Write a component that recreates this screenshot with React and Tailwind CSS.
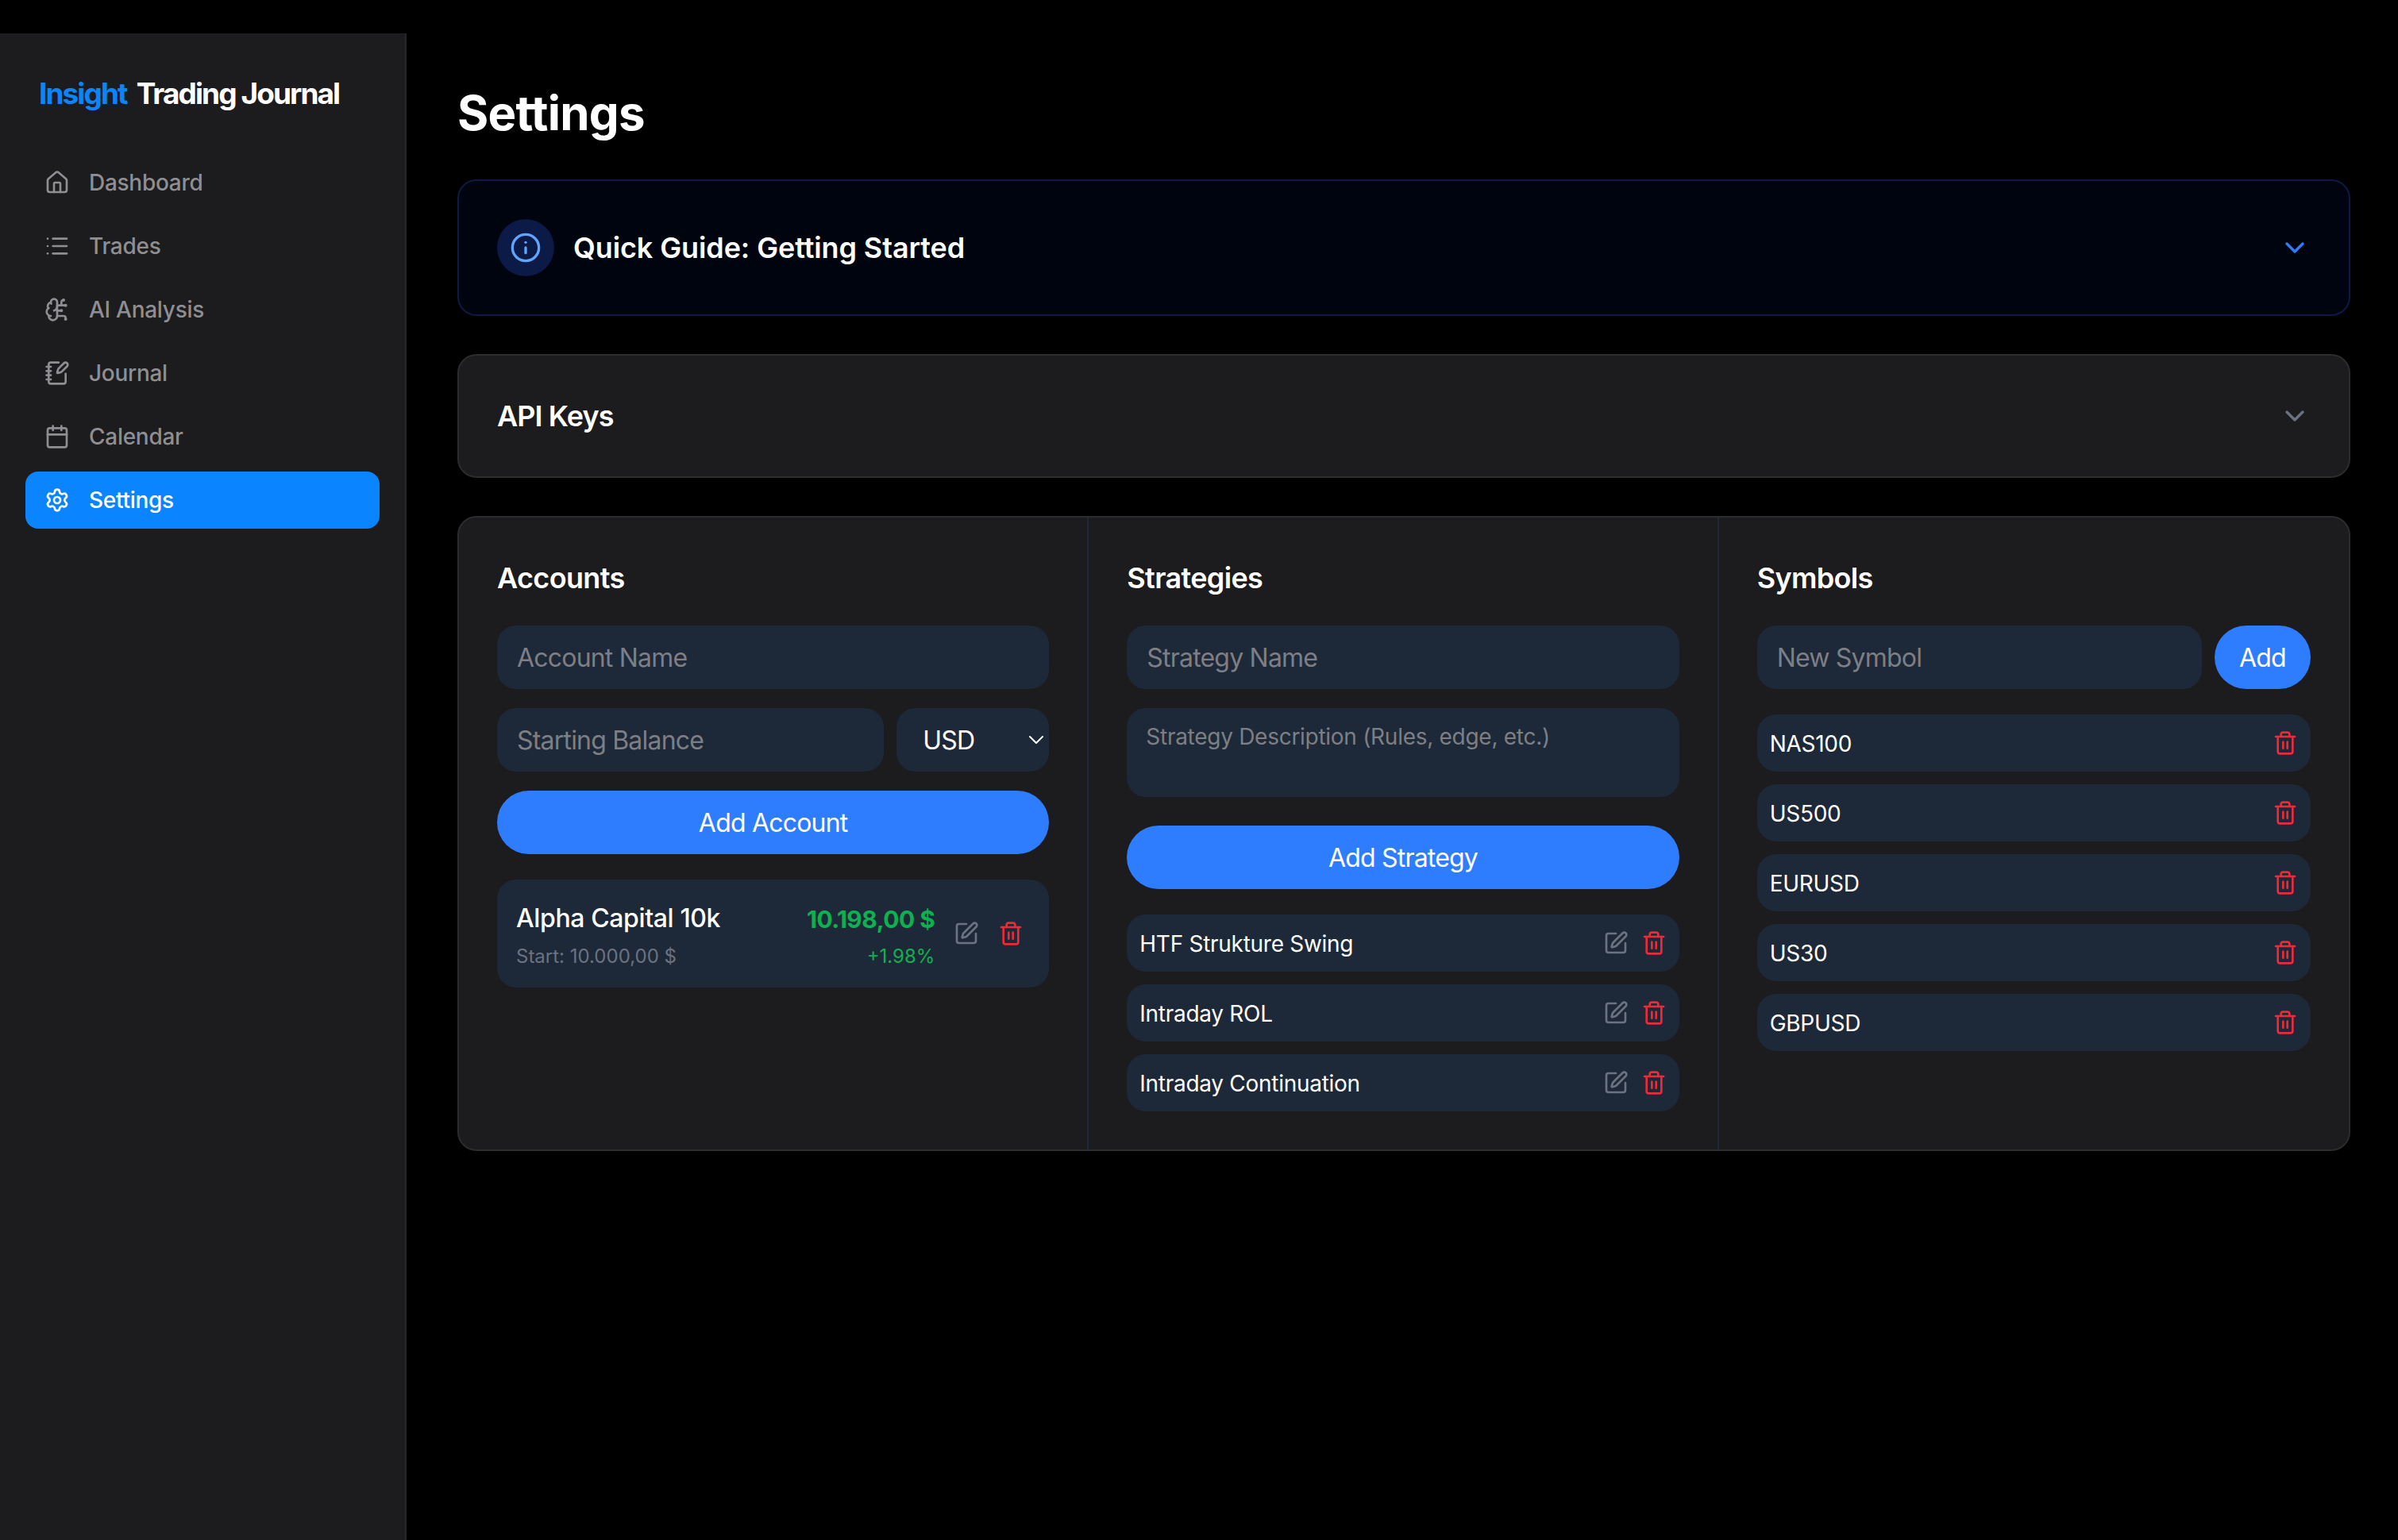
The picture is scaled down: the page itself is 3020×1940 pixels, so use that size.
import { House, List, BrainCircuit, NotebookPen, Calendar, Settings, Info, ChevronDown, SquarePen, Trash2 } from "lucide-react";
import clsx from "clsx";

const NAV = [
  { label: "Dashboard", icon: House },
  { label: "Trades", icon: List },
  { label: "AI Analysis", icon: BrainCircuit },
  { label: "Journal", icon: NotebookPen },
  { label: "Calendar", icon: Calendar },
  { label: "Settings", icon: Settings, active: true },
];

const STRATEGIES = ["HTF Strukture Swing", "Intraday ROL", "Intraday Continuation"];
const SYMBOLS = ["NAS100", "US500", "EURUSD", "US30", "GBPUSD"];

const FIELD = "h-20 min-w-0 rounded-3xl bg-[#1d2938] pt-px pr-6 pl-[25px] text-[32px] tracking-[-0.025em] text-white outline-none placeholder:text-[#7d7f84]";
const BUTTON = "h-20 rounded-full bg-[#2e7dff] pt-px text-[32px] tracking-[-0.025em] text-white";

function EditButton() {
  return <SquarePen className="size-8 shrink-0 text-[#6b7280]" />;
}

function DeleteButton() {
  return <Trash2 className="size-8 shrink-0 text-[#ec2a38]" />;
}

function Sidebar() {
  return (
    <aside className="flex w-[512px] shrink-0 flex-col border-r-2 border-[#26262a] bg-[#1c1c1e] px-8 pt-[52px]">
      <div className="flex gap-3 pl-[17px] text-[37px] leading-12 font-bold tracking-[-0.052em] text-white">
        <span className="text-[#0a84ff]">Insight</span>
        <span>Trading Journal</span>
      </div>
      <nav className="mt-[52px] flex flex-col gap-2">
        {NAV.map(({ label, icon: Icon, active }) => (
          <div
            key={label}
            className={clsx(
              "flex h-[72px] items-center gap-6 rounded-2xl px-6 text-[28px] font-medium tracking-[-0.01em]",
              active ? "bg-[#0a84ff] text-white" : "text-[#8e8e93]"
            )}
          >
            <Icon className="size-8 shrink-0" />
            {label}
          </div>
        ))}
      </nav>
    </aside>
  );
}

function Column({ title, children, last }) {
  return (
    <section className={clsx("flex flex-col p-12", !last && "border-r-2 border-[#1d2938]")}>
      <h2 className="mb-8 text-[36px] leading-14 font-semibold tracking-[-0.018em] text-white">{title}</h2>
      {children}
    </section>
  );
}

function ListRow({ label, edit }) {
  return (
    <div className="flex h-[72px] items-center justify-between rounded-3xl bg-[#1d2938] px-4 text-[28px] tracking-[-0.01em] text-white">
      <span className="pt-px">{label}</span>
      <div className="flex items-center gap-4">
        {edit && <EditButton />}
        <DeleteButton />
      </div>
    </div>
  );
}

export default function App() {
  return (
    <div className="flex h-[1940px] w-[3020px] overflow-hidden bg-black pt-[42px] font-['Inter',sans-serif]">
      <Sidebar />
      <main className="min-w-0 flex-1 pt-16 pr-[60px] pl-16">
        <h1 className="mb-12 text-[60px] leading-[72px] font-bold tracking-[-0.013em] text-white">Settings</h1>

        {/* Collapsed panels */}
        <div className="mb-12 flex items-center justify-between rounded-3xl border-2 border-[#0b1a47] bg-[#00040f] p-12">
          <div className="flex items-center gap-6">
            <div className="flex size-[72px] items-center justify-center rounded-full bg-[#0b1a47]">
              <Info className="size-10 text-[#60a5fa]" />
            </div>
            <h2 className="text-[36px] leading-14 font-semibold tracking-[-0.003em] text-white">Quick Guide: Getting Started</h2>
          </div>
          <ChevronDown className="size-10 text-[#2e7dff]" />
        </div>

        <div className="mb-12 flex items-center justify-between rounded-3xl border-2 border-[#2c2c2e] bg-[#1c1c1e] p-12">
          <h2 className="text-[36px] leading-14 font-semibold tracking-[-0.025em] text-white">API Keys</h2>
          <ChevronDown className="size-10 text-[#6b7280]" />
        </div>

        {/* Accounts / strategies / symbols */}
        <div className="grid grid-cols-3 rounded-3xl border-2 border-[#2c2c2e] bg-[#1c1c1e]">
          <Column title="Accounts">
            <div className="flex flex-col gap-6">
              <input className={FIELD} placeholder="Account Name" />
              <div className="flex gap-4">
                <input className={clsx(FIELD, "flex-1")} placeholder="Starting Balance" />
                <div className="relative h-20 w-48 shrink-0 rounded-3xl bg-[#1d2938]">
                  <select className="h-full w-full appearance-none bg-transparent pt-px pl-[33px] text-[32px] tracking-[-0.025em] text-white outline-none">
                    <option>USD</option>
                  </select>
                  <ChevronDown strokeWidth={1.5} className="pointer-events-none absolute top-6 right-0 size-8 text-white" />
                </div>
              </div>
              <button className={BUTTON}>Add Account</button>
            </div>
            <div className="mt-8 flex h-[136px] items-center rounded-3xl bg-[#1d2938] pr-8 pl-6">
              <div className="flex-1 pt-1">
                <p className="text-[32px] leading-11 font-medium tracking-[-0.012em] text-white">Alpha Capital 10k</p>
                <p className="mt-[10px] text-2xl leading-8 text-[#6b7280]">Start: 10.000,00 $</p>
              </div>
              <div className="pt-1 text-right">
                <p className="pt-px text-[30px] leading-11 font-bold tracking-[-0.018em] text-[#0fb04f]">10.198,00 $</p>
                <p className="mt-[9px] text-2xl leading-8 text-[#0fb04f]">+1.98%</p>
              </div>
              <div className="ml-6 flex items-center gap-6">
                <EditButton />
                <DeleteButton />
              </div>
            </div>
          </Column>

          <Column title="Strategies">
            <div className="flex flex-col gap-6">
              <input className={FIELD} placeholder="Strategy Name" />
              <textarea
                className="h-28 resize-none rounded-3xl bg-[#1d2938] px-6 py-4 text-[28px] leading-10 tracking-[-0.01em] text-white outline-none placeholder:text-[#7d7f84]"
                placeholder="Strategy Description (Rules, edge, etc.)"
              />
            </div>
            <button className={clsx(BUTTON, "mt-9")}>Add Strategy</button>
            <div className="mt-8 flex flex-col gap-4">
              {STRATEGIES.map((s) => (
                <ListRow key={s} label={s} edit />
              ))}
            </div>
          </Column>

          <Column title="Symbols" last>
            <div className="flex gap-4">
              <input className={clsx(FIELD, "flex-1")} placeholder="New Symbol" />
              <button className={clsx(BUTTON, "w-[121px]")}>Add</button>
            </div>
            <div className="mt-8 flex flex-col gap-4">
              {SYMBOLS.map((s) => (
                <ListRow key={s} label={s} />
              ))}
            </div>
          </Column>
        </div>
      </main>
    </div>
  );
}
